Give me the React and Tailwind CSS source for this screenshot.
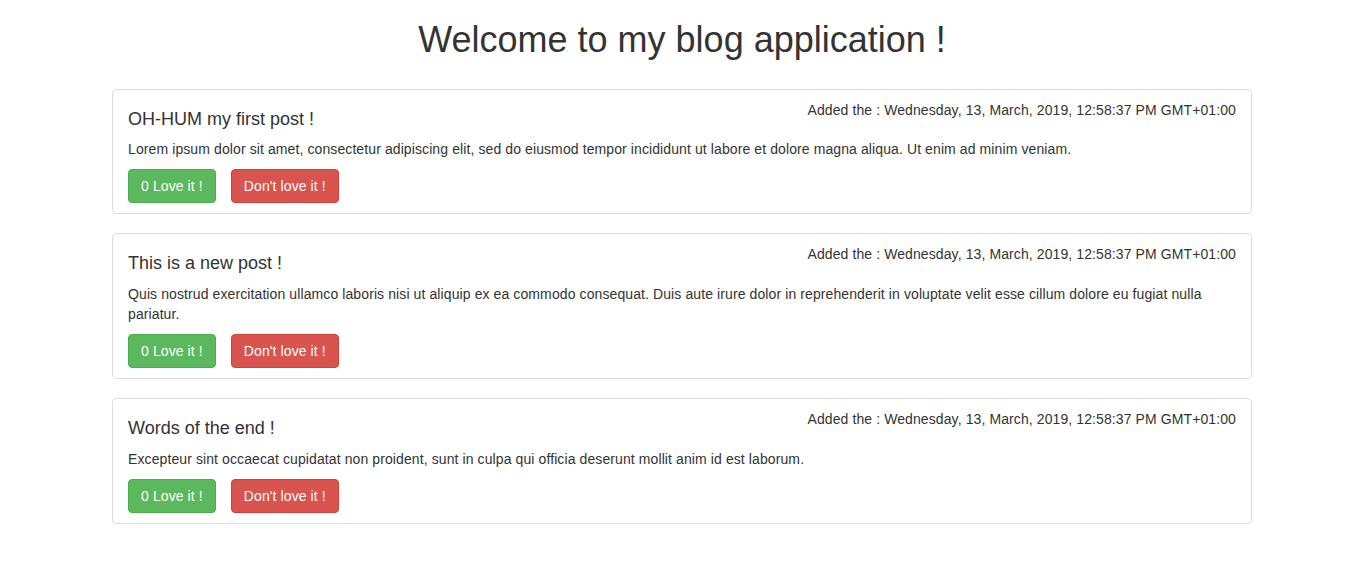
import React from "react";

const posts = [
  {
    title: "OH-HUM my first post !",
    body: "Lorem ipsum dolor sit amet, consectetur adipiscing elit, sed do eiusmod tempor incididunt ut labore et dolore magna aliqua. Ut enim ad minim veniam.",
  },
  {
    title: "This is a new post !",
    body: "Quis nostrud exercitation ullamco laboris nisi ut aliquip ex ea commodo consequat. Duis aute irure dolor in reprehenderit in voluptate velit esse cillum dolore eu fugiat nulla pariatur.",
  },
  {
    title: "Words of the end !",
    body: "Excepteur sint occaecat cupidatat non proident, sunt in culpa qui officia deserunt mollit anim id est laborum.",
  },
];

export default function App() {
  return (
    <div className="min-h-[573px] bg-white font-['Liberation_Sans',Arial,sans-serif] text-[14px] leading-[20px] tracking-[0.1px] text-[#333]">
      <div className="mx-auto w-[1143px] pl-[3px]">
        <h1 className="mt-[20px] mb-[29px] text-center text-[36px] leading-[39.6px] font-normal tracking-normal">
          Welcome to my blog application !
        </h1>
        <div className="flex flex-col gap-[19px]">
          {posts.map((p, i) => (
            <div key={i} className="rounded-[4px] border border-[#ddd] px-[15px] pt-[10px] pb-[10px]">
              <div className="float-right">
                Added the : Wednesday, 13, March, 2019, 12:58:37 PM GMT+01:00
              </div>
              <h4 className="mt-[10px] mb-[10px] text-[18px] leading-[19.8px] font-normal tracking-normal">{p.title}</h4>
              <p className="mb-[10px]">{p.body}</p>
              <div className="flex gap-[15px]">
                <button className="h-[34px] rounded-[4px] border border-[#4cae4c] bg-[#5cb85c] px-[12px] text-white">
                  0 Love it !
                </button>
                <button className="h-[34px] rounded-[4px] border border-[#d43f3a] bg-[#d9534f] px-[12px] text-white">
                  Don't love it !
                </button>
              </div>
            </div>
          ))}
        </div>
      </div>
    </div>
  );
}
